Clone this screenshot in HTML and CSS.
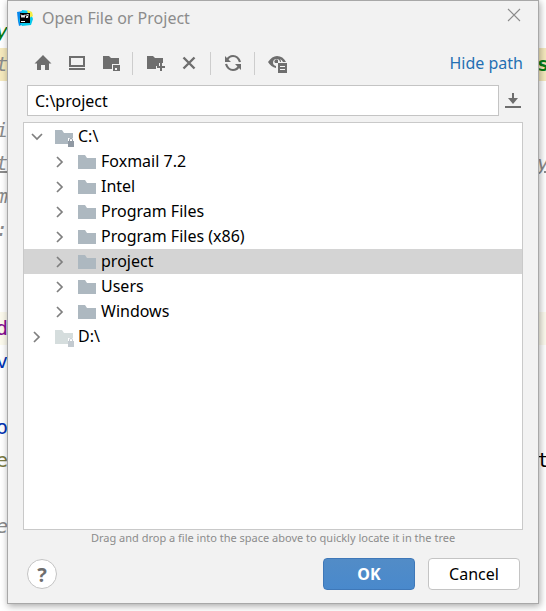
FILE: index.html
```html
<!DOCTYPE html>
<html lang="en">
<head>
<meta charset="utf-8">
<title>Open File or Project</title>
<link rel="stylesheet" href="styles.css">
</head>
<body>
<svg class="defs" aria-hidden="true">
  <symbol id="folder" viewBox="0 0 20 20"><path d="M0 3h7l2 3h9v11H0z" fill="currentColor"/></symbol>
  <symbol id="drive" viewBox="0 0 20 20"><path d="M0 3h7l2 3h9v5h-5v6H0z" fill="currentColor"/><path class="lock" d="M13 14h1v-1q0-2 2-2t2 2v1h1v6h-6zM15 14h2v-1q0-1-1-1t-1 1z" fill-rule="evenodd"/></symbol>
  <symbol id="right" viewBox="0 0 14 14"><path d="M4 2l5 5-5 5" fill="none" stroke="#7f7f7f" stroke-width="1.7"/></symbol>
  <symbol id="down" viewBox="0 0 14 14"><path d="M2 4l5 5 5-5" fill="none" stroke="#7f7f7f" stroke-width="1.7"/></symbol>
</svg>

<div class="editor" aria-hidden="true">
  <div class="line"><span class="left green">y</span></div>
  <div class="line current"><span class="left gray">t</span><span class="right string">s</span></div>
  <div class="line"></div>
  <div class="line"><span class="left gray">i</span></div>
  <div class="line"><span class="left gray under">t</span><span class="right gray under">y</span></div>
  <div class="line"><span class="left gray">m</span></div>
  <div class="line"><span class="left gray">:</span></div>
  <div class="line"></div>
  <div class="line"></div>
  <div class="line pale"><span class="left purple">d</span></div>
  <div class="line"><span class="left blue">v</span></div>
  <div class="line"></div>
  <div class="line"><span class="left blue">o</span></div>
  <div class="line"><span class="left olive">e</span><span class="right black">t</span></div>
  <div class="line"></div>
  <div class="line"><span class="left gray">e</span></div>
</div>

<main class="dialog" role="dialog" aria-labelledby="title">
  <header class="titlebar">
    <svg class="logo" viewBox="0 0 16 16"><path d="M0 2l6-1 1 13-5 2-1-5z" fill="#0788ec"/><path d="M5 0l8 1 3 8-2 6-9 1-3-5z" fill="#08c9ec"/><path d="M10 0l5 2 1 4-4 2z" fill="#f4ed45"/><path d="M3 3h10v10H3z"/><path d="M4 4.500l1 3 1-2.500 1 2.500 1-3M12 5q-3-1-3 .5t2 1q1 1-2 1" fill="none" stroke="#fff"/><path d="M4 11h4v1H4z" fill="#fff"/></svg>
    <h1 id="title">Open File or Project</h1>
    <button class="close" aria-label="Close"><svg viewBox="0 0 14 14"><path d="M1 1l12 12M13 1L1 13" fill="none" stroke="#8a8a8a" stroke-width="1.100"/></svg></button>
  </header>

  <div class="toolbar">
    <div class="group">
      <button class="tool" aria-label="Home"><svg viewBox="0 0 20 20"><path d="M10 2l8.500 8.500H16V17h-4v-5H8v5H4v-6.500H1.500L7 5z"/></svg></button>
      <button class="tool" aria-label="Desktop"><svg viewBox="0 0 20 20"><path d="M2 3h16v11H2zM4 5v7h12V5zM2 15h16v2H2z" fill-rule="evenodd"/></svg></button>
      <button class="tool" aria-label="Project folder"><svg viewBox="0 0 20 20"><path d="M2 3h6l2 2h8v6h-7v5H2z"/><path d="M12 12h7v6h-7zM14 15v2h2v-2z" fill-rule="evenodd"/></svg></button>
    </div>
    <div class="group">
      <button class="tool" aria-label="New folder"><svg viewBox="0 0 20 20"><path d="M2 3h6l2 2h8v5h-4v3h-3v3H2z"/><path d="M15 10h2v3h3v2h-3v3h-2v-3h-3v-2h3z"/></svg></button>
      <button class="tool" aria-label="Delete"><svg viewBox="0 0 20 20"><path d="M4.500 4.500l11 11M15.500 4.500l-11 11" fill="none" stroke="#6e6e6e" stroke-width="2.400"/></svg></button>
    </div>
    <div class="group">
      <button class="tool" aria-label="Refresh"><svg viewBox="0 0 20 20"><path d="M4 7q2-4 6-4 5 0 7 6M16 13q-2 4-6 4-5 0-7-6" fill="none" stroke="#6e6e6e" stroke-width="2.200"/><path d="M2 3v6h6zM18 17v-6h-6z"/></svg></button>
    </div>
    <div class="group">
      <button class="tool" aria-label="Show hidden files"><svg viewBox="0 0 20 20"><path d="M1 9q4-6 9-6 6 0 9 6h-3q-1-2-3-3 1 1 1 3h-1a3.500 3.500 0 1 0-4 4v2Q4 14 1 9z" fill-rule="evenodd"/><path d="M11 7v3H8a2 2 0 0 1 3-3z"/><path d="M11 10h9v10h-9zM13 13v1h5v-1zM13 16v1h5v-1z" fill-rule="evenodd"/></svg></button>
    </div>
    <a class="hide" href="#path">Hide path</a>
  </div>

  <div class="pathrow">
    <input id="path" class="path" type="text" value="C:\project" aria-label="Path">
    <button class="history" aria-label="Recent paths"><svg viewBox="0 0 16 16"><path d="M7 0h2v5h4l-5 6-5-6h4zM0 13h16v2H0z"/></svg></button>
  </div>

  <ul class="tree" role="tree" aria-label="Files">
    <li role="treeitem" aria-expanded="true">
      <div class="row"><svg class="arrow"><use href="#down"/></svg><svg class="icon"><use href="#drive"/></svg><span>C:\</span></div>
      <ul role="group">
        <li role="treeitem"><div class="row"><svg class="arrow"><use href="#right"/></svg><svg class="icon"><use href="#folder"/></svg><span>Foxmail 7.2</span></div></li>
        <li role="treeitem"><div class="row"><svg class="arrow"><use href="#right"/></svg><svg class="icon"><use href="#folder"/></svg><span>Intel</span></div></li>
        <li role="treeitem"><div class="row"><svg class="arrow"><use href="#right"/></svg><svg class="icon"><use href="#folder"/></svg><span>Program Files</span></div></li>
        <li role="treeitem"><div class="row"><svg class="arrow"><use href="#right"/></svg><svg class="icon"><use href="#folder"/></svg><span>Program Files (x86)</span></div></li>
        <li role="treeitem" aria-selected="true"><div class="row selected"><svg class="arrow"><use href="#right"/></svg><svg class="icon"><use href="#folder"/></svg><span>project</span></div></li>
        <li role="treeitem"><div class="row"><svg class="arrow"><use href="#right"/></svg><svg class="icon"><use href="#folder"/></svg><span>Users</span></div></li>
        <li role="treeitem"><div class="row"><svg class="arrow"><use href="#right"/></svg><svg class="icon"><use href="#folder"/></svg><span>Windows</span></div></li>
      </ul>
    </li>
    <li role="treeitem" aria-expanded="false">
      <div class="row"><svg class="arrow"><use href="#right"/></svg><svg class="icon dim"><use href="#drive"/></svg><span>D:\</span></div>
    </li>
  </ul>
  <p class="hint">Drag and drop a file into the space above to quickly locate it in the tree</p>

  <footer class="actions">
    <button class="help" aria-label="Help">?</button>
    <button class="btn primary">OK</button>
    <button class="btn">Cancel</button>
  </footer>
</main>
</body>
</html>
```
FILE: styles.css
```css
* { box-sizing: border-box; }

body {
  margin: 0;
  min-height: 100vh;
  display: grid;
  background: #fff;
  font: 16px/25px "Noto Sans", "Open Sans", sans-serif;
  color: #000;
}

button {
  font: inherit;
  padding: 0;
  border: 0;
  background: none;
}

ul { list-style: none; margin: 0; padding: 0; }
svg { display: block; }
.defs { position: absolute; width: 0; height: 0; }

.editor, .dialog { grid-area: 1 / 1; min-width: 0; }

.editor {
  padding-top: 15px;
  overflow: hidden;
  font: 20px/33px "DejaVu Sans Mono", monospace;
}
.line { display: flex; justify-content: space-between; height: 33px; }
.current { background: #f5e9bd; }
.pale { background: #fcfaed; }
.left { display: flex; justify-content: flex-end; width: 8px; }
.right { width: 9px; margin-left: auto; }
.green { color: #067d17; font-style: italic; }
.string { color: #067d17; font-weight: bold; }
.gray { color: #8c8c8c; font-style: italic; }
.under { text-decoration: underline; }
.purple { color: #871094; }
.blue { color: #0033b3; }
.olive { color: #7a7a43; }
.black { color: #000; }

.dialog {
  position: relative;
  display: flex;
  flex-direction: column;
  margin: 0 7px 7px;
  padding: 0 15px 13px;
  border: 1px solid #a8a8a8;
  background: #f2f2f2;
  box-shadow: 1px 2px 7px rgba(0, 0, 0, 0.35);
}

.titlebar {
  display: flex;
  align-items: center;
  height: 34px;
  margin: 0 0 0 -6px;
}
.logo { width: 16px; height: 16px; }
.titlebar h1 {
  flex: 1;
  margin: 0 0 0 9px;
  font-size: 16px;
  font-weight: normal;
  color: #8c8c8c;
}
.close { margin-bottom: 6px; margin-right: 2px; }
.close svg { width: 14px; height: 14px; }

.toolbar {
  display: flex;
  align-items: center;
  height: 56px;
  padding-left: 10px;
}
.group { display: flex; align-items: center; gap: 14px; height: 23px; }
.group + .group {
  margin-left: 11px;
  padding-left: 12px;
  border-left: 1px solid #cdcdcd;
}
.tool svg { width: 20px; height: 20px; fill: #6e6e6e; }
.hide { margin-left: auto; color: #2470b3; text-decoration: none; }

.pathrow {
  display: flex;
  align-items: center;
  gap: 6px;
  margin: -6px 2px 6px 4px;
}
.path {
  flex: 1;
  min-width: 0;
  height: 31px;
  padding: 0 7px;
  border: 1px solid #c4c4c4;
  border-radius: 0;
  background: #fff;
  font: inherit;
  outline: none;
}
.history svg { width: 16px; height: 16px; fill: #6e6e6e; }

.tree {
  flex: 1;
  padding-top: 1px;
  border: 1px solid #c9c9c9;
  background: #fff;
}
.row { display: flex; align-items: center; height: 25px; padding-left: 6px; }
.tree ul .row { padding-left: 29px; }
.selected { background: #d4d4d4; }
.arrow { width: 14px; height: 14px; }
.icon { width: 20px; height: 20px; margin: 0 3px 0 11px; color: #adb8c0; fill: #9099a3; }
.dim { color: #d5dddd; fill: #c3cad0; }

.hint {
  margin: 0;
  font-size: 11px;
  line-height: 16px;
  text-align: center;
  color: #8c8c8c;
}

.actions {
  display: flex;
  align-items: center;
  gap: 13px;
  margin: 12px 3px 0 4px;
}
.help {
  width: 30px;
  height: 30px;
  margin-right: auto;
  border: 1px solid #c4c4c4;
  border-radius: 50%;
  background: #fff;
  color: #6e6e6e;
  font-size: 20px;
  font-weight: bold;
}
.btn {
  width: 92px;
  height: 32px;
  border: 1px solid #c4c4c4;
  border-radius: 4px;
  background: #fff;
}
.primary {
  border-color: #3f78b8;
  background: linear-gradient(#528cc7, #4989cc);
  color: #fff;
  font-weight: bold;
}
```
